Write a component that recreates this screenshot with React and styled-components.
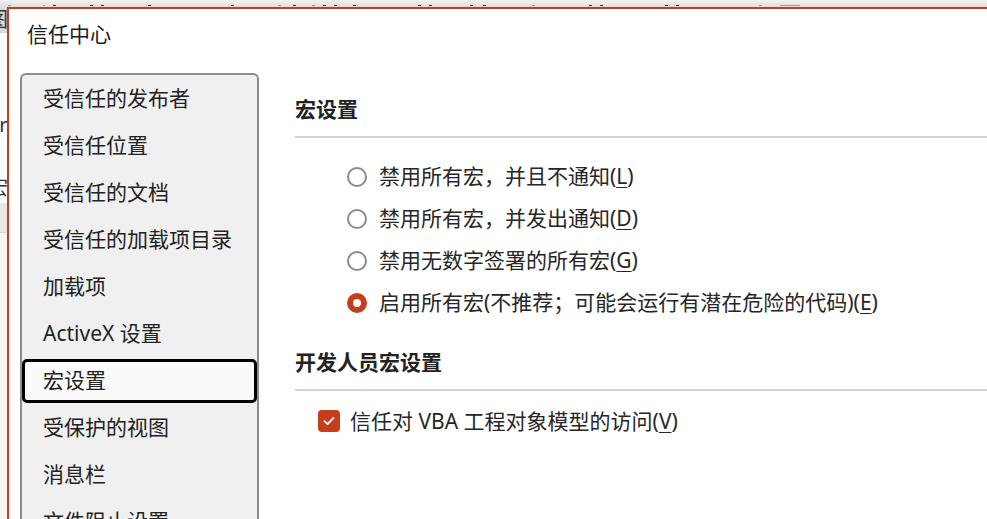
import styled, { createGlobalStyle } from 'styled-components';

const GlobalStyle = createGlobalStyle`
  html, body {
    margin: 0;
    padding: 0;
    background: #ffffff;
  }
  body {
    font-family: "Noto Sans", "Noto Sans CJK SC", sans-serif;
    color: #262626;
  }
`

const Page = styled.div`
  display: grid;
  grid-template-columns: 7px 1fr;
  grid-template-rows: 7px 1fr;
  width: 987px;
  height: 519px;
  overflow: hidden;
`

// window behind the dialog, only its edges show
const TopStrip = styled.div`
  grid-column: 1 / -1;
  background: linear-gradient(#f2f2f2, #dedede);
  display: flex;
  align-items: flex-end;
  padding-bottom: 1px;
  box-sizing: border-box;
`

const Mark = styled.span`
  width: ${(p) => p.$w}px;
  height: 1px;
  margin-left: ${(p) => p.$x}px;
  background: ${(p) => (p.$light ? '#9a9a9a' : '#333')};
  flex: none;
`

const LeftStrip = styled.div`
  display: flex;
  flex-direction: column;
  overflow: hidden;
  box-shadow: inset -2px 0 2px rgba(0, 0, 0, 0.12);
`

const StripBlock = styled.div`
  height: ${(p) => p.$h}px;
  background: ${(p) => p.$bg || '#ffffff'};
  border-bottom: ${(p) => (p.$line ? '1px solid #d6d6d6' : 'none')};
  display: flex;
  align-items: ${(p) => p.$align || 'center'};
  font-size: 20px;
  line-height: 20px;
  color: #333;
  flex: ${(p) => (p.$grow ? 1 : 'none')};

  span {
    margin-left: -12px;
  }
`

const Dialog = styled.div`
  border-top: 2px solid #c43e1c;
  border-left: 2px solid #c43e1c;
  background: #ffffff;
  display: flex;
  flex-direction: column;
  min-width: 0;
`

const TitleBar = styled.div`
  height: 64px;
  box-sizing: border-box;
  padding: 10px 0 0 18px;
  font-size: 21px;
  line-height: 30px;
  color: #1a1a1a;
`

const Body = styled.div`
  display: flex;
  flex: 1;
  min-height: 0;
`

const Nav = styled.nav`
  width: 239px;
  box-sizing: border-box;
  margin-left: 11px;
  background: #f0f0f0;
  border: 2px solid #8c8c8c;
  border-bottom: none;
  border-radius: 6px 6px 0 0;
  display: flex;
  flex-direction: column;
  flex: none;
`

const NavItem = styled.div`
  height: ${(p) => (p.$active ? 44 : 47)}px;
  margin: ${(p) => (p.$active ? '1.5px 0' : '0')};
  box-sizing: border-box;
  padding-left: ${(p) => (p.$active ? 18 : 21)}px;
  padding-bottom: 4px;
  display: flex;
  align-items: center;
  font-size: 21px;
  color: #222;
  white-space: nowrap;
  border: ${(p) => (p.$active ? '3px solid #000' : 'none')};
  border-radius: 5px;
  background: ${(p) => (p.$active ? '#fafafa' : 'transparent')};
  flex: none;
`

const Panel = styled.div`
  flex: 1;
  padding: 21px 0 0 36px;
  display: flex;
  flex-direction: column;
`

const Heading = styled.h2`
  margin: ${(p) => p.$top || 0}px 0 0;
  font-size: 21px;
  line-height: 30px;
  font-weight: 700;
  color: #222;
`

const Divider = styled.div`
  height: 2px;
  background: #d3d3d3;
  margin-top: 12px;
`

const OptionList = styled.div`
  display: flex;
  flex-direction: column;
  padding-left: ${(p) => p.$indent}px;
  margin-top: ${(p) => p.$top}px;
`

const Option = styled.label`
  height: 42px;
  display: flex;
  align-items: center;
  gap: ${(p) => p.$gap}px;
  font-size: 21px;
  color: #262626;
  white-space: nowrap;

  u {
    text-underline-offset: 3px;
    text-decoration-thickness: 1px;
  }
`

const Radio = styled.span`
  width: 20px;
  height: 20px;
  box-sizing: border-box;
  border-radius: 50%;
  border: ${(p) => (p.$checked ? '6px solid #c43e1c' : '2px solid #8a8a8a')};
  background: #fff;
  flex: none;
  margin-top: 3px;
`

const Checkbox = styled.span`
  width: 22px;
  height: 22px;
  border-radius: 4px;
  background: #c43e1c;
  display: flex;
  align-items: center;
  justify-content: center;
  flex: none;
  margin-top: 2px;
`

const navItems = [
  '受信任的发布者',
  '受信任位置',
  '受信任的文档',
  '受信任的加载项目录',
  '加载项',
  'ActiveX 设置',
  '宏设置',
  '受保护的视图',
  '消息栏',
  '文件阻止设置',
]

const macroOptions = [
  { text: '禁用所有宏，并且不通知', key: 'L' },
  { text: '禁用所有宏，并发出通知', key: 'D' },
  { text: '禁用无数字签署的所有宏', key: 'G' },
  { text: '启用所有宏(不推荐；可能会运行有潜在危险的代码)', key: 'E', checked: true },
]

// bits of text from the window behind, cut off by the dialog
const marks = [
  [8, 3, true], [32, 2, true], [8, 3], [34, 3], [8, 3], [44, 3], [80, 3],
  [44, 3, true], [12, 3], [16, 3, true], [8, 3], [8, 3], [16, 3], [62, 3],
  [8, 3], [38, 3], [10, 3], [46, 3, true], [54, 3], [8, 3], [62, 3],
  [8, 3], [80, 3, true], [18, 20, true],
]

export default function App() {
  return (
    <>
      <GlobalStyle />
      <Page>
        <TopStrip>
          {marks.map(([x, w, light], i) => (
            <Mark key={i} $x={x} $w={w} $light={light} />
          ))}
        </TopStrip>
        <LeftStrip>
          <StripBlock $h={26} $bg="#d9d9d9"><span>图</span></StripBlock>
          <StripBlock $h={140} $align="flex-end">
            <span style={{ marginBottom: 38 }}>er</span>
          </StripBlock>
          <StripBlock $h={30}><span>宏</span></StripBlock>
          <StripBlock $h={29} $bg="#e9e9e9" $line />
          <StripBlock $grow $bg="#f6f6f6" />
        </LeftStrip>
        <Dialog>
          <TitleBar>信任中心</TitleBar>
          <Body>
            <Nav>
              {navItems.map((item) => (
                <NavItem key={item} $active={item === '宏设置'}>{item}</NavItem>
              ))}
            </Nav>
            <Panel>
              <Heading>宏设置</Heading>
              <Divider />
              <OptionList $indent={52} $top={16}>
                {macroOptions.map((o) => (
                  <Option key={o.key} $gap={12}>
                    <Radio $checked={o.checked} />
                    <span>{o.text}(<u>{o.key}</u>)</span>
                  </Option>
                ))}
              </OptionList>
              <Heading $top={25}>开发人员宏设置</Heading>
              <Divider />
              <OptionList $indent={23} $top={8}>
                <Option $gap={10}>
                  <Checkbox>
                    <svg width="14" height="14" viewBox="0 0 14 14" fill="none">
                      <path d="M2.5 7.2 L5.6 10.2 L11.5 3.8" stroke="#fff" strokeWidth="1.8" strokeLinecap="round" strokeLinejoin="round" />
                    </svg>
                  </Checkbox>
                  <span>信任对 VBA 工程对象模型的访问(<u>V</u>)</span>
                </Option>
              </OptionList>
            </Panel>
          </Body>
        </Dialog>
      </Page>
    </>
  )
}
